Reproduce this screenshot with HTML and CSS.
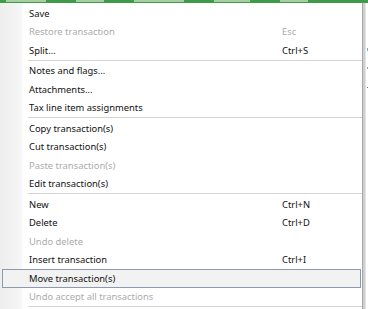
FILE: index.html
```html
<!DOCTYPE html>
<html lang="en">
<head>
<meta charset="UTF-8">
<title>Transaction menu</title>
<link rel="stylesheet" href="styles.css">
</head>
<body>

<div class="grid-strip">
    <span class="cell-text w1"></span>
    <span class="cell-text w2"></span>
    <span class="cell-text w3"></span>
    <span class="cell-text w4"></span>
    <span class="cell-text w2"></span>
</div>

<div class="screen">
    <div class="menu">
        <div class="item"><span class="label">Save</span></div>
        <div class="item disabled"><span class="label">Restore transaction</span><span class="key">Esc</span></div>
        <div class="item"><span class="label">Split...</span><span class="key">Ctrl+S</span></div>
        <div class="sep"></div>
        <div class="item"><span class="label">Notes and flags...</span></div>
        <div class="item"><span class="label">Attachments...</span></div>
        <div class="item"><span class="label">Tax line item assignments</span></div>
        <div class="sep"></div>
        <div class="item"><span class="label">Copy transaction(s)</span></div>
        <div class="item"><span class="label">Cut transaction(s)</span></div>
        <div class="item disabled"><span class="label">Paste transaction(s)</span></div>
        <div class="item"><span class="label">Edit transaction(s)</span></div>
        <div class="sep"></div>
        <div class="item"><span class="label">New</span><span class="key">Ctrl+N</span></div>
        <div class="item"><span class="label">Delete</span><span class="key">Ctrl+D</span></div>
        <div class="item disabled"><span class="label">Undo delete</span></div>
        <div class="item"><span class="label">Insert transaction</span><span class="key">Ctrl+I</span></div>
        <div class="item active"><span class="label">Move transaction(s)</span></div>
        <div class="item disabled"><span class="label">Undo accept all transactions</span></div>
        <div class="sep"></div>
    </div>
    <div class="behind">
        <div class="mark m1"></div>
        <div class="mark m2"></div>
        <div class="mark m3"></div>
    </div>
</div>

</body>
</html>
```

FILE: styles.css
```css
body {
    margin: 0;
    background: #ffffff;
    font-family: "Noto Sans", "Open Sans", sans-serif;
    font-size: 9.4px;
    color: #111111;
    overflow: hidden;
}

.grid-strip {
    height: 3px;
    background: #3f9a4a;
    display: flex;
    gap: 30px;
    padding-left: 6px;
}

.cell-text {
    height: 2px;
    background: #a8cfa0;
}
.w1 { width: 40px; }
.w2 { width: 28px; }
.w3 { width: 50px; }
.w4 { width: 36px; }

.screen {
    display: flex;
    height: 306px;
}

.menu {
    width: 362px;
    background: linear-gradient(to right, #eeeeee 0, #f4f4f4 18px, #f8f8f8 22px, #ffffff 23px);
    border-right: 1px solid #a7a7a7;
    box-shadow: 2px 0 0 #cfcfcf, 3px 0 0 #e4e4e4;
    padding-top: 1px;
    display: flex;
    flex-direction: column;
}

.item {
    height: 18.5px;
    display: flex;
    align-items: center;
    padding-left: 27px;
    margin: 0 1px 0 2px;
    box-sizing: border-box;
    border: 1px solid transparent;
    border-left-width: 0;
}

.item .label {
    flex: 1;
}

.item .key {
    width: 78px;
}

.item.disabled {
    color: #ababab;
}

.item.active {
    background: #f2f2f2;
    border: 1px solid #8a9bb0;
    padding-left: 26px;
}

.sep {
    height: 2px;
    margin-left: 28px;
    border-top: 1px solid #d4d4d4;
    box-sizing: border-box;
}

.behind {
    flex: 1;
    position: relative;
    margin-left: 4px;
}

.mark {
    position: absolute;
    left: 0;
    width: 2px;
    background: #7aaacf;
}
.m1 { top: 45px; height: 3px; }
.m2 { top: 64px; height: 2px; }
.m3 { top: 84px; height: 1px; background: #2d7fcf; }
```
